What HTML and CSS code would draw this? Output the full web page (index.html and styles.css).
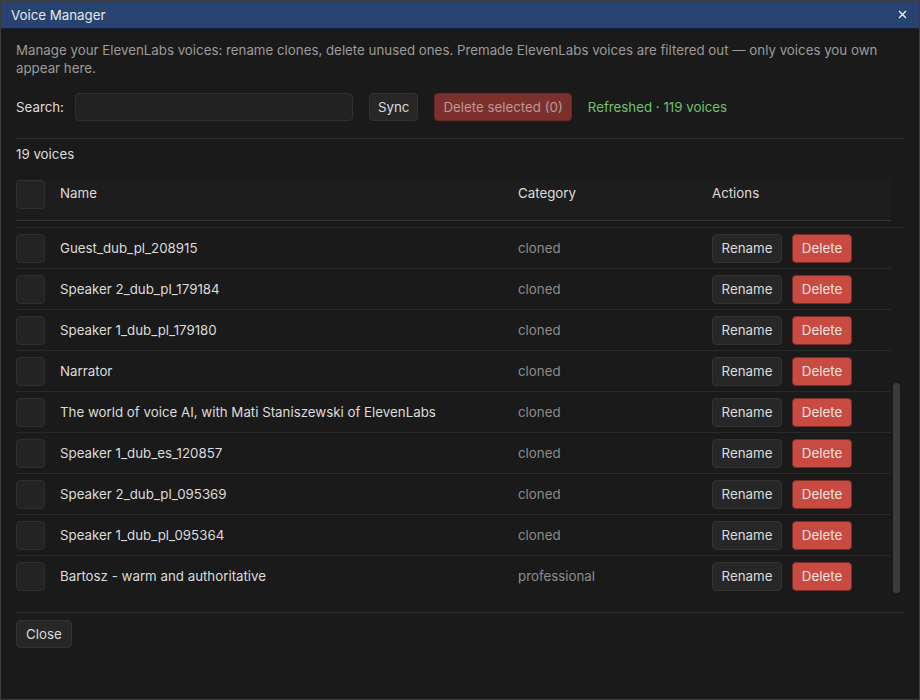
FILE: index.html
```html
<!DOCTYPE html>
<html lang="en">
<head>
    <meta charset="UTF-8">
    <title>Voice Manager</title>
    <link rel="stylesheet" href="styles.css">
</head>
<body>
    <div class="window">
        <div class="titlebar">
            <span class="title">Voice Manager</span>
            <svg class="close-x" width="9" height="9" viewBox="0 0 9 9">
                <path d="M1 1 L8 8 M8 1 L1 8" stroke="#f0f0f0" stroke-width="1.4" fill="none"/>
            </svg>
        </div>
        <div class="content">
            <p class="desc">Manage your ElevenLabs voices: rename clones, delete unused ones. Premade ElevenLabs voices are filtered out — only voices you own appear here.</p>

            <div class="toolbar">
                <label>Search:</label>
                <div class="input"></div>
                <button class="btn">Sync</button>
                <button class="btn btn-danger-dim">Delete selected (0)</button>
                <span class="status">Refreshed · 119 voices</span>
            </div>

            <div class="sep"></div>
            <div class="count">19 voices</div>

            <div class="table-head">
                <div class="cell"><span class="check"></span></div>
                <div class="cell">Name</div>
                <div class="cell">Category</div>
                <div class="cell">Actions</div>
            </div>

            <div class="scroll">
                <div class="rows" id="rows"></div>
                <div class="scrollbar"><div class="thumb"></div></div>
            </div>

            <div class="sep sep-bottom"></div>
            <button class="btn btn-close">Close</button>
        </div>
    </div>

    <script>
        // visible part of the list (scrolled to the bottom)
        const voices = [
            ['Guest_dub_pl_208915', 'cloned'],
            ['Speaker 2_dub_pl_179184', 'cloned'],
            ['Speaker 1_dub_pl_179180', 'cloned'],
            ['Narrator', 'cloned'],
            ['The world of voice AI, with Mati Staniszewski of ElevenLabs', 'cloned'],
            ['Speaker 1_dub_es_120857', 'cloned'],
            ['Speaker 2_dub_pl_095369', 'cloned'],
            ['Speaker 1_dub_pl_095364', 'cloned'],
            ['Bartosz - warm and authoritative', 'professional']
        ];

        const rows = document.getElementById('rows');
        voices.forEach(([name, cat]) => {
            const row = document.createElement('div');
            row.className = 'row';
            row.innerHTML =
                '<div class="cell"><span class="check"></span></div>' +
                '<div class="cell name"></div>' +
                '<div class="cell cat"></div>' +
                '<div class="cell actions"><button class="btn">Rename</button><button class="btn btn-danger">Delete</button></div>';
            row.querySelector('.name').textContent = name;
            row.querySelector('.cat').textContent = cat;
            rows.appendChild(row);
        });
    </script>
</body>
</html>
```

FILE: styles.css
```css
* {
    margin: 0;
    padding: 0;
    box-sizing: border-box;
}

body {
    font-family: 'Inter', 'Liberation Sans', sans-serif;
    font-size: 13.3px;
    color: #dcdcdc;
    background: #1a1a1a;
}

.window {
    width: 920px;
    height: 700px;
    border: 1px solid #3c3c3c;
    background: #1a1a1a;
    display: flex;
    flex-direction: column;
}

.titlebar {
    height: 28px;
    flex: none;
    background: #294370;
    border-bottom: 1px solid #15213a;
    display: flex;
    align-items: center;
    justify-content: space-between;
    padding: 0 12px 0 10px;
    color: #e8e8e8;
}

.content {
    padding: 12px 15px 0;
}

.desc {
    color: #9a9a9a;
    line-height: 18px;
    width: 880px;
}

.toolbar {
    margin-top: 16px;
    display: flex;
    align-items: center;
    height: 28px;
}

.toolbar label {
    margin-right: 11px;
}

.input {
    width: 278px;
    height: 28px;
    background: #222;
    border: 1px solid #303030;
    border-radius: 4px;
    margin-right: 16px;
}

.btn {
    font-family: inherit;
    font-size: 13.3px;
    color: #dcdcdc;
    background: #272727;
    border: 1px solid #323232;
    border-radius: 4px;
    height: 28px;
    padding: 0 8px;
}

.toolbar .btn {
    margin-right: 16px;
}

.btn-danger-dim {
    background: #7c302c;
    border-color: #6a2825;
    color: #b89a98;
}

.btn-danger {
    background: #c94a40;
    border-color: #7b2e29;
    color: #f2e6e4;
}

.status {
    color: #6dc46b;
}

.sep {
    height: 1px;
    background: #2e2e2e;
    margin-top: 17px;
    width: 888px;
}

.count {
    margin-top: 7px;
    line-height: 16px;
}

.table-head,
.row {
    display: grid;
    grid-template-columns: 44px 458px 194px 1fr;
    width: 875px;
    align-items: center;
}

.table-head {
    margin-top: 17px;
    height: 42px;
    background: #1d1d1d;
    border-bottom: 1px solid #353535;
    padding-bottom: 14px;
}

.table-head .cell {
    align-self: start;
    padding-top: 1px;
}

.table-head .cell:not(:first-child) {
    padding-top: 6px;
}

.check {
    display: block;
    width: 29px;
    height: 29px;
    background: #232323;
    border: 1px solid #2f2f2f;
    border-radius: 4px;
}

.scroll {
    position: relative;
    margin-top: 6px;
    height: 366px;
    overflow: hidden;
    border-top: 1px solid #2a2a2a;
}

.row {
    height: 41px;
    border-bottom: 1px solid #2a2a2a;
}

.cat {
    color: #8c8c8c;
}

.actions {
    display: flex;
    gap: 10px;
}

.actions .btn {
    height: 29px;
}

.actions .btn:first-child {
    width: 70px;
}

.actions .btn-danger {
    width: 60px;
}

.scrollbar {
    position: absolute;
    right: 0;
    top: 0;
    width: 14px;
    height: 100%;
}

.thumb {
    position: absolute;
    left: 3px;
    top: 155px;
    width: 7px;
    height: 210px;
    background: #3b3b3b;
    border-radius: 4px;
}

.sep-bottom {
    margin-top: 19px;
}

.btn-close {
    margin-top: 7px;
    padding: 0 9px;
}
```
